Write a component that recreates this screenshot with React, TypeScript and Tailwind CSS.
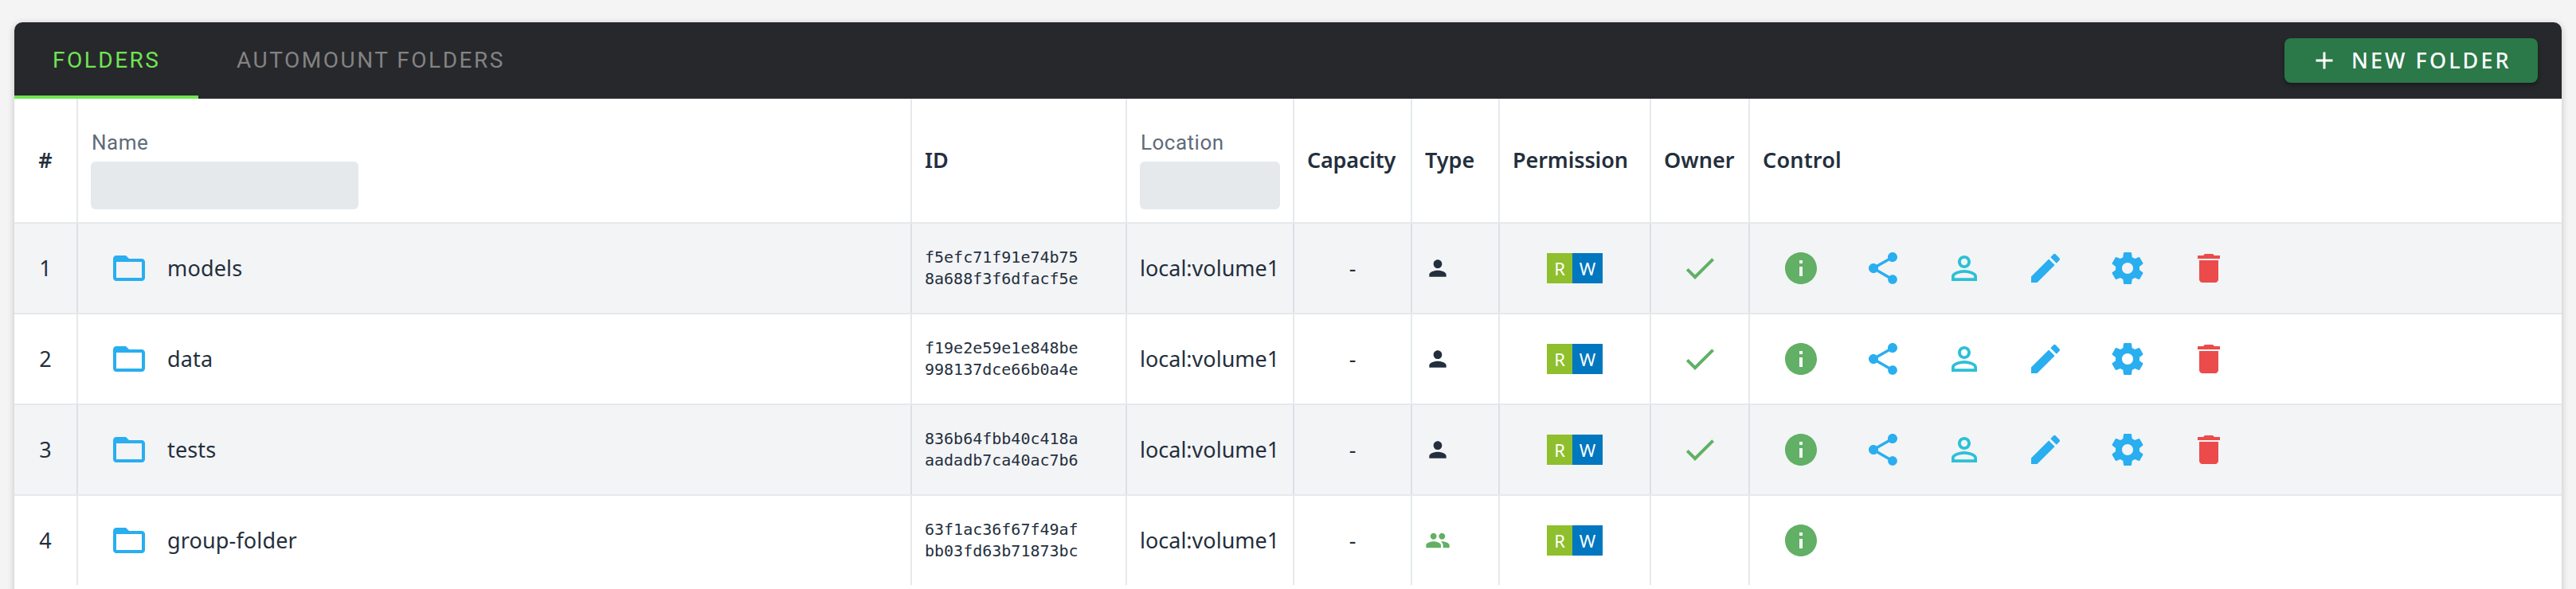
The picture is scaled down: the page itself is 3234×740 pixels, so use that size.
import React from "react";
import { MdInfo, MdShare, MdEdit, MdDelete, MdPerson, MdPeople, MdAdd } from "react-icons/md";

const COLS = "grid grid-cols-[80px_1047px_270px_210px_148px_110px_190px_124px_1fr]";
const FOLDERS = [
  { name: "models", id: ["f5efc71f91e74b75", "8a688f3f6dfacf5e"], group: false },
  { name: "data", id: ["f19e2e59e1e848be", "998137dce66b0a4e"], group: false },
  { name: "tests", id: ["836b64fbb40c418a", "aadadb7ca40ac7b6"], group: false },
  { name: "group-folder", id: ["63f1ac36f67f49af", "bb03fd63b71873bc"], group: true },
];

const GEAR =
  "M19.43 12.98c.04-.32.07-.64.07-.98s-.03-.66-.07-.98l2.11-1.65c.19-.15.24-.42.12-.64l-2-3.46c-.12-.22-.39-.3-.61-.22l-2.49 1c-.52-.4-1.08-.73-1.69-.98l-.38-2.65C14.46 2.18 14.25 2 14 2h-4c-.25 0-.46.18-.49.42l-.38 2.65c-.61.25-1.17.59-1.69.98l-2.49-1c-.23-.09-.49 0-.61.22l-2 3.46c-.13.22-.07.49.12.64l2.11 1.65c-.04.32-.07.65-.07.98s.03.66.07.98l-2.11 1.65c-.19.15-.24.42-.12.64l2 3.46c.12.22.39.3.61.22l2.49-1c.52.4 1.08.73 1.69.98l.38 2.65c.03.24.24.42.49.42h4c.25 0 .46-.18.49-.42l.38-2.65c.61-.25 1.17-.59 1.69-.98l2.49 1c.23.09.49 0 .61-.22l2-3.46c.12-.22.07-.49-.12-.64l-2.11-1.65zM12 15.5c-1.93 0-3.5-1.57-3.5-3.5s1.57-3.5 3.5-3.5 3.5 1.57 3.5 3.5-1.57 3.5-3.5 3.5z";
const FOLDER =
  "M20 6h-8l-2-2H4c-1.1 0-1.99.9-1.99 2L2 18c0 1.1.9 2 2 2h16c1.1 0 2-.9 2-2V8c0-1.1-.9-2-2-2zm0 12H4V8h16v10z";
const CHECK = "M9 16.17L4.83 12l-1.42 1.41L9 19 21 7l-1.41-1.41z";
const PERSON =
  "M12 5.9a2.1 2.1 0 1 1 0 4.2 2.1 2.1 0 0 1 0-4.2m0 9c2.97 0 6.1 1.46 6.1 2.1v1.1H5.9V17c0-.64 3.13-2.1 6.1-2.1M12 4C9.79 4 8 5.79 8 8s1.79 4 4 4 4-1.79 4-4-1.79-4-4-4zm0 9c-2.67 0-8 1.34-8 4v3h16v-3c0-2.66-5.33-4-8-4z";

function Icon({ d, className = "" }: { d: string; className?: string }) {
  return (
    <svg viewBox="0 0 24 24" className={`size-12 shrink-0 ${className}`} fill="currentColor" fillRule="evenodd">
      <path d={d} />
    </svg>
  );
}

function Slot({ children }: { children: React.ReactNode }) {
  return <div className="flex w-[102.4px] shrink-0 items-center justify-center">{children}</div>;
}

function FilterHead({ label, wide }: { label: string; wide?: boolean }) {
  return (
    <div className="pt-[37px] pl-4 font-[Roboto,sans-serif] text-[26px] font-normal tracking-[0.5px] text-[#5f6b7a]">
      <div className="h-[42px] pl-[1px] leading-[36px]">{label}</div>
      <div className={`h-[60px] rounded-md bg-[#e5e9ec] ${wide ? "w-[336px]" : "w-[176px]"}`} />
    </div>
  );
}

export default function App() {
  return (
    <div className="h-[740px] overflow-hidden bg-[#f4f4f4] px-[18px] pt-7 font-['Noto_Sans',sans-serif] text-[27px] text-[#242f3d]">
      <div className="h-[760px] overflow-hidden rounded-t-[10px] bg-white shadow-[0_2px_10px_rgba(0,0,0,0.2)]">
        <header className="flex h-24 items-stretch justify-between bg-[#27282c] pr-[30px]">
          <nav className="flex font-[Roboto,sans-serif] text-[28px] tracking-[2.5px]">
            <div className="flex w-[231px] items-center border-b-4 border-[#6fe552] pt-1 pl-12 text-[#6fe552]">FOLDERS</div>
            <div className="flex items-center border-b-4 border-transparent pt-1 pl-12 text-[#838383]">AUTOMOUNT FOLDERS</div>
          </nav>
          <button className="flex h-14 w-[318px] items-center self-center rounded-lg bg-[#2b7849] pl-[32px] font-medium tracking-[3.05px] text-white shadow-[0_3px_5px_rgba(0,0,0,0.35)]">
            <MdAdd className="size-9" />
            <span className="ml-[16px] whitespace-nowrap">NEW FOLDER</span>
          </button>
        </header>
        <div className={`${COLS} h-[157px] divide-x-2 divide-[#e5e9ec] border-b-2 border-[#e5e9ec] font-semibold`}>
          <div className="flex items-center justify-center">#</div>
          <FilterHead label="Name" wide />
          <div className="flex items-center pl-4">ID</div>
          <FilterHead label="Location" />
          <div className="flex items-center pl-4 tracking-[-0.2px]">Capacity</div>
          <div className="flex items-center pl-4">Type</div>
          <div className="flex items-center pl-4 tracking-[-0.1px]">Permission</div>
          <div className="flex items-center pl-4">Owner</div>
          <div className="flex items-center pl-4 tracking-[0.2px]">Control</div>
        </div>
        {FOLDERS.map((f, i) => (
          <div
            key={f.name}
            className={`${COLS} ${i === 3 ? "h-[112px]" : "h-[114px] border-b-2 border-[#e5e9ec]"} divide-x-2 ${i % 2 ? "divide-[#e5e9ec]" : "divide-[#dcdfe5] bg-[#f3f4f6]"}`}
          >
            <div className="flex items-center justify-center">{i + 1}</div>
            <div className="flex items-center pl-10">
              <Icon d={FOLDER} className="text-[#29aef0]" />
              <span className="ml-6 tracking-[0.15px]">{f.name}</span>
            </div>
            <div className="flex flex-col justify-center pl-4 font-['DejaVu_Sans_Mono',monospace] text-[20px] leading-[27px]">
              <div>{f.id[0]}</div>
              <div>{f.id[1]}</div>
            </div>
            <div className="flex items-center pl-4">local:volume1</div>
            <div className="flex items-center justify-center">-</div>
            <div className="flex items-center pl-4">
              {f.group ? <MdPeople className="size-8 text-[#61b065]" /> : <MdPerson className="size-8" />}
            </div>
            <div className="flex items-center justify-center text-[22px] text-white">
              <span className="flex h-[38px] w-8 items-center justify-center bg-[#8fbf2d]">R</span>
              <span className="flex h-[38px] w-[38px] items-center justify-center bg-[#0077bf]">W</span>
            </div>
            <div className="flex items-center justify-center">
              {!f.group && <Icon d={CHECK} className="text-[#61b065]" />}
            </div>
            <div className="flex items-center pl-[13px] text-[#29aef0]">
              <Slot><MdInfo className="size-12 text-[#61b065]" /></Slot>
              {!f.group && (
                <>
                  <Slot><MdShare className="size-12" /></Slot>
                  <Slot><Icon d={PERSON} className="text-[#2cc0d6]" /></Slot>
                  <Slot><MdEdit className="size-12" /></Slot>
                  <Slot><Icon d={GEAR} /></Slot>
                  <Slot><MdDelete className="size-12 text-[#eb4b4b]" /></Slot>
                </>
              )}
            </div>
          </div>
        ))}
      </div>
    </div>
  );
}
